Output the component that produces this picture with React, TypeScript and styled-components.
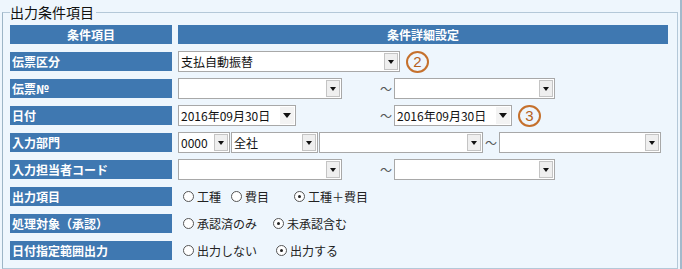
import { FC } from 'react';
import styled, { createGlobalStyle } from 'styled-components';

const GlobalStyle = createGlobalStyle`
  html, body {
    margin: 0;
    padding: 0;
    background: #eef6fd;
  }
  body {
    font-family: "Noto Sans CJK JP", "Noto Sans", sans-serif;
    font-size: 12px;
    color: #1a1a1a;
  }
`;

const CSSPage = styled.div`
  box-sizing: border-box;
  width: 682px;
  height: 269px;
  padding-top: 2px;
  border-right: 2px solid #a3b9cb;
  background: #eef6fd;
`;

const CSSFieldset = styled.fieldset`
  margin: 0 2px 0 2px;
  padding: 3px 9px 8px 7px;
  border: 1px solid #b4c8d8;
  border-left-color: #9db5c6;
  min-width: 0;
`;

const CSSLegend = styled.legend`
  margin-left: 0;
  padding: 0 2px 0 0;
  font-size: 14px;
  line-height: 20px;
  color: #111;
`;

const CSSGrid = styled.div`
  display: grid;
  grid-template-columns: 162px 490px;
  grid-auto-rows: 19px;
  column-gap: 6px;
  row-gap: 8px;
`;

const CSSHeadCell = styled.div`
  background: #3f78b1;
  color: #fff;
  font-weight: bold;
  font-size: 12px;
  line-height: 19px;
  text-align: center;
`;

const CSSLabel = styled.div`
  background: #3f78b1;
  color: #fff;
  font-weight: bold;
  font-size: 12px;
  line-height: 19px;
  padding-left: 2px;
  white-space: nowrap;
`;

const CSSDetail = styled.div`
  display: flex;
  align-items: center;
  min-width: 0;
`;

const CSSFromGroup = styled.div`
  display: flex;
  align-items: center;
  width: 200px;
  flex: none;
`;

const CSSSelect = styled.div<{ $w: number; $gap?: number }>`
  box-sizing: border-box;
  display: flex;
  align-items: center;
  flex: none;
  width: ${({ $w }) => $w}px;
  height: 21px;
  margin-right: ${({ $gap }) => $gap ?? 0}px;
  border: 1px solid #a8a8a8;
  background: #fff;
  font-size: 12px;
  color: #111;
`;

const CSSSelectText = styled.span`
  flex: 1;
  padding-left: 2px;
  white-space: nowrap;
  overflow: hidden;
`;

const CSSArrow = styled.span<{ $boxed?: boolean }>`
  box-sizing: border-box;
  display: flex;
  align-items: center;
  justify-content: center;
  width: 14px;
  height: 17px;
  margin-right: 1px;
  background: ${({ $boxed }) => ($boxed ? '#efefef' : '#f3f3f3')};
  border: 1px solid ${({ $boxed }) => ($boxed ? '#c4c4c4' : 'transparent')};

  &::after {
    content: '';
    border-left: ${({ $boxed }) => ($boxed ? 3 : 4)}px solid transparent;
    border-right: ${({ $boxed }) => ($boxed ? 3 : 4)}px solid transparent;
    border-top: ${({ $boxed }) => ($boxed ? 4 : 5)}px solid #111;
  }
`;

const CSSTilde = styled.span<{ $w: number }>`
  flex: none;
  width: ${({ $w }) => $w}px;
  text-align: center;
  color: #555;
  font-size: 12px;
`;

const CSSMark = styled.span`
  box-sizing: border-box;
  display: inline-flex;
  align-items: center;
  justify-content: center;
  flex: none;
  width: 23px;
  height: 22px;
  margin-left: 6px;
  border: 2px solid #c5702c;
  border-radius: 50%;
  color: #b5601c;
  font-family: "Liberation Sans", sans-serif;
  font-size: 15px;
  line-height: 1;
`;

const CSSRadioGroup = styled.div`
  display: flex;
  align-items: center;
  padding-left: 5px;
`;

const CSSRadioItem = styled.label<{ $gap?: number }>`
  display: flex;
  align-items: center;
  margin-right: ${({ $gap }) => $gap ?? 0}px;
  font-size: 12px;
  color: #222;
  white-space: nowrap;
`;

const CSSRadioDot = styled.span<{ $on?: boolean }>`
  box-sizing: border-box;
  display: inline-flex;
  align-items: center;
  justify-content: center;
  width: 11px;
  height: 11px;
  margin-right: 3px;
  border: 1px solid #555;
  border-radius: 50%;
  background: #fff;

  &::after {
    content: '';
    display: ${({ $on }) => ($on ? 'block' : 'none')};
    width: 3px;
    height: 3px;
    border-radius: 50%;
    background: #222;
  }
`;

const Select: FC<{ w: number; value?: string; gap?: number; boxed?: boolean }> = ({
  w,
  value = '',
  gap,
  boxed = true,
}) => (
  <CSSSelect $w={w} $gap={gap}>
    <CSSSelectText>{value}</CSSSelectText>
    <CSSArrow $boxed={boxed} />
  </CSSSelect>
);

const Radio: FC<{ text: string; on?: boolean; gap?: number }> = ({ text, on, gap }) => (
  <CSSRadioItem $gap={gap}>
    <CSSRadioDot $on={on} />
    {text}
  </CSSRadioItem>
);

const App: FC = () => {
  return (
    <CSSPage>
      <GlobalStyle />
      <CSSFieldset>
        <CSSLegend>出力条件項目</CSSLegend>
        <CSSGrid>
          <CSSHeadCell>条件項目</CSSHeadCell>
          <CSSHeadCell>条件詳細設定</CSSHeadCell>

          <CSSLabel>伝票区分</CSSLabel>
          <CSSDetail>
            <Select w={222} value="支払自動振替" />
            <CSSMark>2</CSSMark>
          </CSSDetail>

          <CSSLabel>伝票№</CSSLabel>
          <CSSDetail>
            <CSSFromGroup>
              <Select w={164} />
            </CSSFromGroup>
            <CSSTilde $w={16}>～</CSSTilde>
            <Select w={161} />
          </CSSDetail>

          <CSSLabel>日付</CSSLabel>
          <CSSDetail>
            <CSSFromGroup>
              <Select w={118} value="2016年09月30日" boxed={false} />
            </CSSFromGroup>
            <CSSTilde $w={16}>～</CSSTilde>
            <Select w={118} value="2016年09月30日" boxed={false} />
            <CSSMark>3</CSSMark>
          </CSSDetail>

          <CSSLabel>入力部門</CSSLabel>
          <CSSDetail>
            <Select w={52} value="0000" gap={1} />
            <Select w={87} value="全社" gap={1} />
            <Select w={164} />
            <CSSTilde $w={16}>～</CSSTilde>
            <Select w={162} />
          </CSSDetail>

          <CSSLabel>入力担当者コード</CSSLabel>
          <CSSDetail>
            <CSSFromGroup>
              <Select w={164} />
            </CSSFromGroup>
            <CSSTilde $w={16}>～</CSSTilde>
            <Select w={161} />
          </CSSDetail>

          <CSSLabel>出力項目</CSSLabel>
          <CSSDetail>
            <CSSRadioGroup>
              <Radio text="工種" gap={10} />
              <Radio text="費目" gap={25} />
              <Radio text="工種＋費目" on />
            </CSSRadioGroup>
          </CSSDetail>

          <CSSLabel>処理対象（承認）</CSSLabel>
          <CSSDetail>
            <CSSRadioGroup>
              <Radio text="承認済のみ" gap={16} />
              <Radio text="未承認含む" on />
            </CSSRadioGroup>
          </CSSDetail>

          <CSSLabel>日付指定範囲出力</CSSLabel>
          <CSSDetail>
            <CSSRadioGroup>
              <Radio text="出力しない" gap={19} />
              <Radio text="出力する" on />
            </CSSRadioGroup>
          </CSSDetail>
        </CSSGrid>
      </CSSFieldset>
    </CSSPage>
  );
};

export default App;
